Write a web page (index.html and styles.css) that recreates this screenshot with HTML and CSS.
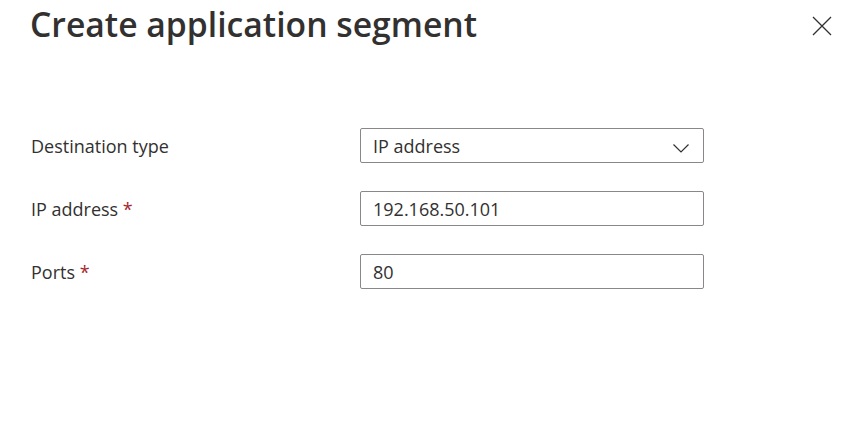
FILE: index.html
```html
<!DOCTYPE html>
<html lang="en">
<head>
    <meta charset="UTF-8">
    <meta name="viewport" content="width=device-width, initial-scale=1.0">
    <title>Create application segment</title>
    <link rel="stylesheet" href="styles.css">
</head>
<body>
    <div class="painel">
        <div class="cabecalho">
            <h1>Create application segment</h1>
            <button class="fechar" aria-label="Close">
                <svg width="20" height="20" viewBox="0 0 20 20">
                    <path d="M1 1 L19 19 M19 1 L1 19" stroke="#323130" stroke-width="1.3" fill="none"/>
                </svg>
            </button>
        </div>
        <div class="formulario">
            <label class="rotulo">Destination type</label>
            <div class="campo seletor">
                <span>IP address</span>
                <svg class="seta" width="16" height="9" viewBox="0 0 16 9">
                    <path d="M0.5 0.5 L8 8 L15.5 0.5" stroke="#323130" stroke-width="1.2" fill="none"/>
                </svg>
            </div>

            <label class="rotulo">IP address <span class="obrigatorio">*</span></label>
            <div class="campo"><span>192.168.50.101</span></div>

            <label class="rotulo">Ports <span class="obrigatorio">*</span></label>
            <div class="campo"><span>80</span></div>
        </div>
    </div>
</body>
</html>
```

FILE: styles.css
```css
body {
    margin: 0;
    font-family: "Open Sans", "Noto Sans", sans-serif;
    color: #323130;
    background: #fff;
}
.painel {
    padding: 0 20px 0 30px;
}
.cabecalho {
    display: flex;
    justify-content: space-between;
    align-items: flex-start;
    height: 128px;
}
h1 {
    margin: 0;
    padding-top: 2px;
    font-size: 33.7px;
    font-weight: 600;
    line-height: 44px;
}
.fechar {
    margin-top: 16px;
    padding: 0;
    border: none;
    background: none;
    width: 20px;
    height: 20px;
}
.formulario {
    display: grid;
    grid-template-columns: 330px 344px;
    row-gap: 28px;
    align-items: center;
}
.rotulo {
    font-size: 18px;
    padding-left: 1px;
}
.obrigatorio {
    color: #a4262c;
}
.campo {
    box-sizing: border-box;
    height: 35px;
    border: 1px solid #8a8886;
    border-radius: 2px;
    padding: 0 12px;
    display: flex;
    align-items: center;
    justify-content: space-between;
    font-size: 18px;
}
.seta {
    margin-right: 2px;
    margin-top: 5px;
}
```
